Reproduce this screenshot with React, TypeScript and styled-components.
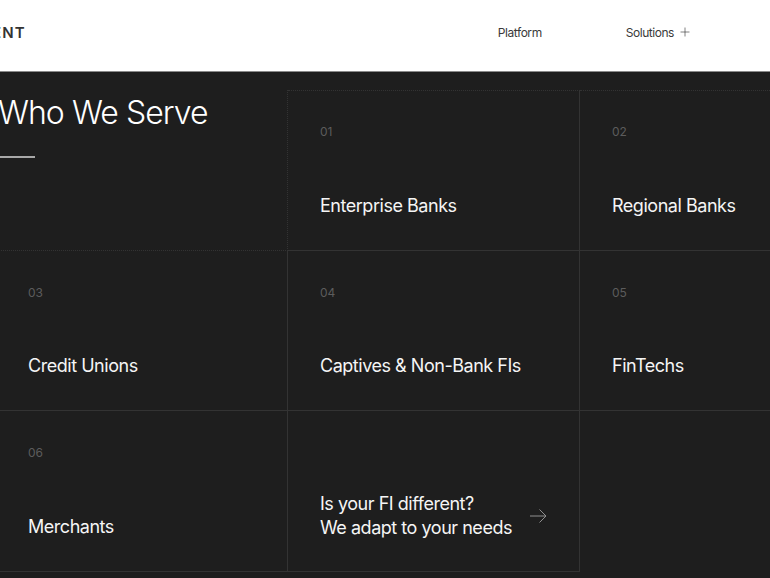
import styled, {createGlobalStyle} from "styled-components";
import {Plus} from "lucide-react";

const segments = [
    {num: "01", name: "Enterprise Banks"},
    {num: "02", name: "Regional Banks"},
    {num: "03", name: "Credit Unions"},
    {num: "04", name: "Captives & Non-Bank FIs"},
    {num: "05", name: "FinTechs"},
    {num: "06", name: "Merchants"},
];

const App = () => {
    return (
        <>
            <GlobalStyle/>
            <Page>
                <Header>
                    <Logo>ENT</Logo>
                    <Nav>
                        <NavLink>Platform</NavLink>
                        <NavLink>
                            Solutions
                            <Plus size={14} strokeWidth={1.1}/>
                        </NavLink>
                    </Nav>
                </Header>
                <Section>
                    <Grid>
                        <Intro>
                            <Title>Who We Serve</Title>
                            <Rule/>
                        </Intro>
                        {segments.map((segment) => (
                            <Card key={segment.num}>
                                <Num>{segment.num}</Num>
                                <Name>{segment.name}</Name>
                            </Card>
                        ))}
                        <Card>
                            <Cta>
                                <Name>Is your FI different?<br/>We adapt to your needs</Name>
                                <svg width="17" height="14" viewBox="0 0 17 14" fill="none" stroke="#8f8f8f" strokeWidth="1">
                                    <path d="M0 7H16M9.5 0.5L16 7L9.5 13.5"/>
                                </svg>
                            </Cta>
                        </Card>
                    </Grid>
                </Section>
            </Page>
        </>
    );
};

export default App;

const GlobalStyle = createGlobalStyle`
    html, body {
        margin: 0;
        height: 100%;
        overflow: hidden;
        background: #1e1e1e;
    }

    * {
        box-sizing: border-box;
    }
`;

const Page = styled.div`
    width: 770px;
    height: 578px;
    overflow: hidden;
    font-family: "Inter", "Liberation Sans", sans-serif;
`;

const Header = styled.header`
    height: 72px;
    display: flex;
    align-items: center;
    justify-content: space-between;
    padding: 0 78px 7px 0;
    background: #fff;
    border-bottom: 1px solid #8a8a8a;
`;

const Logo = styled.div`
    margin-left: -8px;
    font-size: 15px;
    font-weight: 600;
    letter-spacing: 1.2px;
    color: #333;
`;

const Nav = styled.nav`
    display: flex;
    gap: 84px;
`;

const NavLink = styled.a`
    display: flex;
    align-items: center;
    gap: 4px;
    font-size: 12px;
    letter-spacing: -0.45px;
    color: #3a3a3a;
`;

const Section = styled.section`
    height: 506px;
    padding-top: 18px;
    background: #1e1e1e;
`;

const Grid = styled.div`
    display: grid;
    grid-template-columns: repeat(3, 292px);
    grid-auto-rows: 160.5px;
    margin-left: -4px;
`;

const Intro = styled.div`
    padding: 3px 0 0 2px;
    border-right: 1px dotted #333;
    border-bottom: 1px dotted #333;
`;

const Title = styled.h2`
    margin: 0;
    font-size: 32px;
    font-weight: 300;
    line-height: 40px;
    letter-spacing: -0.95px;
    color: #fff;
`;

const Rule = styled.div`
    width: 37px;
    height: 2px;
    margin-top: 23px;
    background: #a8a8a8;
`;

const Card = styled.div`
    display: flex;
    flex-direction: column;
    justify-content: space-between;
    padding: 35px 0 32px 32px;
    border-right: 1px solid #333;
    border-bottom: 1px solid #333;

    &:nth-child(-n + 3) {
        padding-top: 34px;
        border-top: 1px dotted #333;
    }
`;

const Num = styled.span`
    font-size: 12px;
    line-height: 14px;
    color: #5c5c5c;
`;

const Name = styled.div`
    font-size: 18px;
    font-weight: 400;
    line-height: 24px;
    letter-spacing: -0.47px;
    white-space: nowrap;
    color: #f5f5f5;
`;

const Cta = styled.div`
    display: flex;
    align-items: center;
    gap: 18px;
    margin-top: auto;
    margin-bottom: -1px;
`;
